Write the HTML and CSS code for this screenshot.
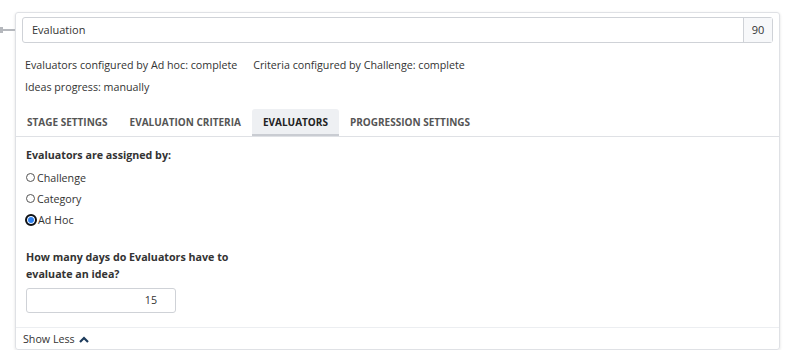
FILE: index.html
```html
<!DOCTYPE html>
<html lang="en">
<head>
  <meta charset="UTF-8" />
  <title>Stage</title>
  <link rel="stylesheet" href="styles.css">
</head>
<body>
  <div class="stage">
    <div class="connector"></div>
    <div class="card">
      <div class="name-row">
        <div class="name-input">Evaluation</div>
        <div class="name-addon">90</div>
      </div>

      <div class="summary">
        <div class="summary-line">
          <span>Evaluators configured by Ad hoc: complete</span>
          <span>Criteria configured by Challenge: complete</span>
        </div>
        <div class="summary-line">
          <span>Ideas progress: manually</span>
        </div>
      </div>

      <div class="tabs">
        <div class="tab">STAGE SETTINGS</div>
        <div class="tab">EVALUATION CRITERIA</div>
        <div class="tab active">EVALUATORS</div>
        <div class="tab">PROGRESSION SETTINGS</div>
      </div>

      <div class="tab-body">
        <div class="label">Evaluators are assigned by:</div>
        <div class="radios">
          <div class="radio"><span class="dot"></span>Challenge</div>
          <div class="radio"><span class="dot"></span>Category</div>
          <div class="radio checked"><span class="dot"></span>Ad Hoc</div>
        </div>

        <div class="label days-label">How many days do Evaluators have to<br>evaluate an idea?</div>
        <div class="days-input">15</div>
      </div>

      <div class="card-footer">
        Show Less
        <svg class="chevron" width="10" height="7" viewBox="0 0 10 7">
          <path d="M1 6 L5 2 L9 6" fill="none" stroke="#1d3b5c" stroke-width="2.2"/>
        </svg>
      </div>
    </div>
  </div>
</body>
</html>
```

FILE: styles.css
```css
* { box-sizing: border-box; margin: 0; padding: 0; }
body {
  background: #fff;
  color: #333;
  font-family: "Open Sans", "Liberation Sans", sans-serif;
  font-size: 10.7px;
}
.stage {
  position: relative;
  padding: 12px 9px 0 15px;
}
.connector {
  position: absolute;
  left: -3px;
  top: 27px;
  width: 18px;
  height: 6px;
  border-left: 6px solid #b5b8bd;
  border-radius: 3px;
}
.connector::after {
  content: "";
  position: absolute;
  left: 0;
  top: 2px;
  width: 12px;
  height: 2px;
  background: #b5b8bd;
}
.card {
  border: 1px solid #dfe1e5;
  border-radius: 3px;
  box-shadow: 0 1px 3px rgba(0, 0, 0, 0.12);
  height: 338px;
  display: flex;
  flex-direction: column;
}
.name-row {
  display: flex;
  margin: 4px 6px 0 6px;
  height: 26px;
  border: 1px solid #cfd2d7;
  border-radius: 3px;
  font-size: 11px;
}
.name-input {
  flex: 1;
  padding: 0 9px;
  line-height: 24px;
  color: #333;
}
.name-addon {
  width: 29px;
  border-left: 1px solid #cfd2d7;
  background: #f7f8fa;
  text-align: center;
  line-height: 24px;
}
.summary {
  padding: 11px 9px 0;
}
.summary-line {
  display: flex;
  gap: 16px;
  height: 22px;
  line-height: 22px;
}
.tabs {
  display: flex;
  margin-top: 11px;
  border-bottom: 1px solid #dfe1e5;
}
.tab {
  padding: 0 11px;
  height: 27px;
  line-height: 27px;
  font-size: 10px;
  font-weight: 700;
  color: #555;
}
.tab.active {
  background: #eef0f3;
  border-radius: 3px 3px 0 0;
  color: #222;
  border-bottom: 2px solid #c9ccd2;
}
.tab-body {
  flex: 1;
  padding: 10px 10px 0 10px;
}
.label {
  font-weight: 700;
  color: #333;
  line-height: 17px;
}
.radios {
  margin-top: 3px;
}
.radio {
  display: flex;
  align-items: center;
  height: 21px;
  gap: 2px;
}
.dot {
  width: 9px;
  height: 9px;
  border: 1px solid #555;
  border-radius: 50%;
}
.radio.checked .dot {
  width: 12px;
  height: 12px;
  margin-left: -1px;
  margin-right: -1px;
  border: 2px solid #111;
  background: #2f80ed;
  box-shadow: inset 0 0 0 1px #fff;
}
.days-label {
  margin-top: 19px;
}
.days-input {
  margin-top: 5px;
  width: 150px;
  height: 25px;
  border: 1px solid #cfd2d7;
  border-radius: 3px;
  text-align: right;
  padding-right: 18px;
  line-height: 23px;
}
.card-footer {
  border-top: 1px solid #eceef1;
  height: 22px;
  padding: 0 7px;
  display: flex;
  align-items: center;
  gap: 4px;
}
.chevron {
  margin-top: 1px;
}
```
